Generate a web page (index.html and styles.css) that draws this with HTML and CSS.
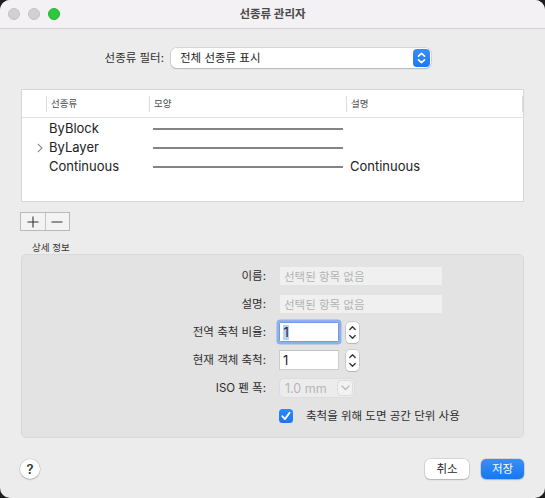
FILE: index.html
```html
<!DOCTYPE html>
<html lang="ko">
<head>
<meta charset="utf-8">
<title>선종류 관리자</title>
<link rel="stylesheet" href="styles.css">
</head>
<body>
<div class="window">
  <div class="titlebar">
    <div class="lights">
      <span class="light gray"></span>
      <span class="light gray"></span>
      <span class="light green"></span>
    </div>
    <div class="title">선종류 관리자</div>
    <div></div>
  </div>

  <div class="content">
    <div class="filter-row">
      <label class="filter-label">선종류 필터:</label>
      <div class="popup">
        <span class="popup-text">전체 선종류 표시</span>
        <span class="popup-arrows">
          <svg width="17" height="18" viewBox="0 0 17 18"><path d="M5.5 7.2 L8.5 4.4 L11.5 7.2 M5.5 10.8 L8.5 13.6 L11.5 10.8" fill="none" stroke="#fff" stroke-width="1.6" stroke-linecap="round" stroke-linejoin="round"/></svg>
        </span>
      </div>
    </div>

    <div class="table">
      <div class="thead">
        <div class="th"></div>
        <div class="th div">선종류</div>
        <div class="th div">모양</div>
        <div class="th div last">설명</div>
      </div>
      <div class="tbody">
        <div class="tr">
          <div class="td"></div>
          <div class="td name">ByBlock</div>
          <div class="td shape"><span class="line"></span></div>
          <div class="td desc"></div>
        </div>
        <div class="tr">
          <div class="td disc"><svg width="6" height="10" viewBox="0 0 6 10"><path d="M0.8 0.8 L5 5 L0.8 9.2" fill="none" stroke="#8a8a8a" stroke-width="1.1"/></svg></div>
          <div class="td name">ByLayer</div>
          <div class="td shape"><span class="line"></span></div>
          <div class="td desc"></div>
        </div>
        <div class="tr">
          <div class="td"></div>
          <div class="td name">Continuous</div>
          <div class="td shape"><span class="line"></span></div>
          <div class="td desc">Continuous</div>
        </div>
      </div>
    </div>

    <div class="segmented">
      <span class="seg">
        <svg width="12" height="12" viewBox="0 0 12 12"><path d="M6 0.5 V11.5 M0.5 6 H11.5" stroke="#333" stroke-width="1.1"/></svg>
      </span>
      <span class="seg">
        <svg width="12" height="12" viewBox="0 0 12 12"><path d="M0.5 6 H11.5" stroke="#333" stroke-width="1.1"/></svg>
      </span>
    </div>

    <div class="section-label">상세 정보</div>

    <div class="details">
      <div class="dl">이름:</div>
      <div class="dv"><div class="field disabled wide">선택된 항목 없음</div></div>

      <div class="dl">설명:</div>
      <div class="dv"><div class="field disabled wide">선택된 항목 없음</div></div>

      <div class="dl">전역 축척 비율:</div>
      <div class="dv">
        <div class="field num focus"><span class="sel">1</span></div>
        <span class="stepper">
          <svg width="13" height="21" viewBox="0 0 13 21"><path d="M3.8 7.5 L6.5 4.8 L9.2 7.5 M3.8 13.5 L6.5 16.2 L9.2 13.5" fill="none" stroke="#333" stroke-width="1.3" stroke-linecap="round" stroke-linejoin="round"/></svg>
        </span>
      </div>

      <div class="dl">현재 객체 축척:</div>
      <div class="dv">
        <div class="field num">1</div>
        <span class="stepper">
          <svg width="13" height="21" viewBox="0 0 13 21"><path d="M3.8 7.5 L6.5 4.8 L9.2 7.5 M3.8 13.5 L6.5 16.2 L9.2 13.5" fill="none" stroke="#333" stroke-width="1.3" stroke-linecap="round" stroke-linejoin="round"/></svg>
        </span>
      </div>

      <div class="dl">ISO 펜 폭:</div>
      <div class="dv">
        <div class="mini-popup">
          <span class="mini-text">1.0 mm</span>
          <span class="mini-btn">
            <svg width="9" height="6" viewBox="0 0 9 6"><path d="M1 1 L4.5 4.5 L8 1" fill="none" stroke="#b8b8b8" stroke-width="1.2" stroke-linecap="round" stroke-linejoin="round"/></svg>
          </span>
        </div>
      </div>

      <div class="dl"></div>
      <div class="dv check-row">
        <span class="checkbox">
          <svg width="14" height="14" viewBox="0 0 14 14"><path d="M3.4 7.3 L6 10 L10.6 3.8" fill="none" stroke="#fff" stroke-width="1.9" stroke-linecap="round" stroke-linejoin="round"/></svg>
        </span>
        <span class="check-text">축척을 위해 도면 공간 단위 사용</span>
      </div>
    </div>

    <div class="footer">
      <span class="help">?</span>
      <span class="spacer"></span>
      <button class="btn">취소</button>
      <button class="btn primary">저장</button>
    </div>
  </div>
</div>
</body>
</html>
```

FILE: styles.css
```css
html, body {
  margin: 0;
  padding: 0;
  background: #1e1e1e;
}

body {
  width: 545px;
  height: 498px;
  overflow: hidden;
}

.window {
  width: 545px;
  height: 498px;
  background: #ececec;
  border-radius: 10px;
  overflow: hidden;
  display: flex;
  flex-direction: column;
  font-family: Inter, "Noto Sans CJK KR", sans-serif;
  color: #2b2b2b;
}

/* title bar */
.titlebar {
  height: 28px;
  flex: none;
  background: #f3f1f4;
  border-bottom: 1px solid #d2d1d3;
  display: grid;
  grid-template-columns: 1fr auto 1fr;
  align-items: center;
}

.lights {
  display: flex;
  gap: 8px;
  padding-left: 8px;
}

.light {
  width: 12px;
  height: 12px;
  border-radius: 50%;
  box-sizing: border-box;
}

.light.gray {
  background: #d1d0d2;
  border: 0.5px solid #c3c2c4;
}

.light.green {
  background: #2bc840;
  border: 0.5px solid #22b236;
}

.title {
  font-size: 11.5px;
  font-weight: 700;
  color: #4a4a4a;
  line-height: 14px;
}

/* content */
.content {
  padding: 0 21px;
  display: flex;
  flex-direction: column;
}

.filter-row {
  margin-top: 19px;
  height: 20px;
  display: flex;
  align-items: center;
  gap: 7px;
}

.filter-label {
  width: 143px;
  text-align: right;
  font-size: 11.5px;
  line-height: 14px;
  color: #2e2e2e;
}

.popup {
  width: 260px;
  height: 20px;
  box-sizing: border-box;
  background: #fff;
  border-radius: 5px;
  box-shadow: 0 0 0 0.5px rgba(0, 0, 0, 0.18), 0 1px 1.5px rgba(0, 0, 0, 0.14);
  display: flex;
  align-items: center;
  justify-content: space-between;
  padding: 0 1px 0 9px;
}

.popup-text {
  font-size: 11.5px;
  line-height: 14px;
  color: #222;
}

.popup-arrows {
  width: 17px;
  height: 18px;
  border-radius: 4px;
  background: linear-gradient(#3a8ef8, #1f78f3);
  display: flex;
}

/* table */
.table {
  margin-top: 21px;
  height: 113px;
  box-sizing: border-box;
  background: #fff;
  border: 1px solid #d6d6d6;
}

.thead,
.tr {
  display: grid;
  grid-template-columns: 24px 103px 197px 1fr;
}

.thead {
  height: 27px;
  border-bottom: 1px solid #e3e3e3;
  align-items: center;
}

.th {
  position: relative;
  height: 27px;
  line-height: 27px;
  padding-left: 5px;
  font-size: 9.5px;
  color: #4a4a4a;
}

.th.div::before {
  content: "";
  position: absolute;
  left: 0;
  top: 6px;
  width: 1px;
  height: 16px;
  background: #dcdcdc;
}

.th.last::after {
  content: "";
  position: absolute;
  right: 0;
  top: 6px;
  width: 1px;
  height: 16px;
  background: #dcdcdc;
}

.tbody {
  padding-top: 1px;
}

.tr {
  height: 19px;
  align-items: center;
}

.td {
  font-size: 13px;
  line-height: 19px;
  color: #222;
  height: 19px;
}

.td.disc {
  padding-left: 15px;
  display: flex;
  align-items: center;
}

.td.name {
  padding-left: 3px;
}

.td.shape {
  padding-left: 4px;
  display: flex;
  align-items: center;
}

.line {
  display: block;
  width: 190px;
  height: 2px;
  background: #838383;
}

.td.desc {
  padding-left: 4px;
}

/* segmented +/- */
.segmented {
  margin-top: 10px;
  margin-left: -1px;
  width: 50px;
  height: 19px;
  box-sizing: border-box;
  display: flex;
  border: 1px solid #b9b9b9;
  background: #f3f3f3;
}

.seg {
  flex: 1;
  display: flex;
  align-items: center;
  justify-content: center;
}

.seg + .seg {
  border-left: 1px solid #c4c4c4;
}

.section-label {
  margin-top: 10px;
  padding-left: 11px;
  font-size: 9.5px;
  line-height: 13px;
  height: 13px;
  color: #333;
}

/* details */
.details {
  margin-top: 0;
  height: 184px;
  box-sizing: border-box;
  background: #e3e3e3;
  border: 1px solid #d9d9d9;
  border-radius: 5px;
  padding: 11px 0;
  display: grid;
  grid-template-columns: 244px 1fr;
  grid-auto-rows: 20px;
  column-gap: 13px;
  row-gap: 8px;
}

.dl {
  text-align: right;
  font-size: 11.5px;
  line-height: 20px;
  color: #2e2e2e;
}

.dv {
  display: flex;
  align-items: center;
  gap: 7px;
}

.field {
  height: 20px;
  box-sizing: border-box;
  display: flex;
  align-items: center;
}

.field.disabled {
  background: #f0f0f0;
  border: 1px solid #e3e3e3;
  color: #b2b2b2;
  font-size: 11.5px;
  padding-left: 4px;
}

.field.wide {
  width: 164px;
}

.field.num {
  width: 60px;
  background: #fff;
  border: 1px solid #cdcdcd;
  border-top-color: #c2c2c2;
  font-size: 13px;
  color: #1e1e1e;
  padding-left: 3px;
}

.field.focus {
  border-color: #6d9be4;
  box-shadow: 0 0 0 2.5px #8eb1ec;
  border-radius: 1.5px;
}

.sel {
  background: #b5d2f7;
  line-height: 15px;
  padding: 0 0.5px;
}

.stepper {
  width: 13px;
  height: 21px;
  background: #fff;
  border-radius: 4px;
  box-shadow: 0 0 0 0.5px rgba(0, 0, 0, 0.2), 0 1px 1px rgba(0, 0, 0, 0.12);
  display: flex;
}

.mini-popup {
  width: 76px;
  height: 20px;
  box-sizing: border-box;
  border-radius: 5px;
  background: #ececec;
  border: 1px solid #dddddd;
  display: flex;
  align-items: center;
  justify-content: space-between;
  padding: 0 1px 0 5px;
}

.mini-text {
  font-size: 12.5px;
  color: #b6b6b6;
}

.mini-btn {
  width: 16px;
  height: 16px;
  box-sizing: border-box;
  border: 1px solid #dcdcdc;
  border-radius: 4px;
  background: #f2f2f2;
  display: flex;
  align-items: center;
  justify-content: center;
}

.check-row {
  gap: 13px;
}

.checkbox {
  width: 14px;
  height: 14px;
  border-radius: 3.5px;
  background: linear-gradient(#2f88f8, #1a76f2);
  display: flex;
}

.check-text {
  font-size: 11.5px;
  line-height: 20px;
  color: #2e2e2e;
}

/* footer */
.footer {
  margin-top: 21px;
  height: 20px;
  display: flex;
  align-items: center;
  gap: 12px;
}

.help {
  width: 20px;
  height: 20px;
  margin-left: -1px;
  border-radius: 50%;
  background: #fff;
  box-shadow: 0 0 0 0.5px rgba(0, 0, 0, 0.16), 0 1px 1.5px rgba(0, 0, 0, 0.18);
  display: flex;
  align-items: center;
  justify-content: center;
  font-size: 13px;
  font-weight: 600;
  color: #333;
}

.spacer {
  flex: 1;
}

.btn {
  height: 20px;
  width: 44px;
  padding: 0;
  border: none;
  border-radius: 5px;
  background: #fff;
  box-shadow: 0 0 0 0.5px rgba(0, 0, 0, 0.18), 0 1px 1.5px rgba(0, 0, 0, 0.16);
  font-family: Inter, "Noto Sans CJK KR", sans-serif;
  font-size: 11.5px;
  color: #2b2b2b;
  line-height: 20px;
}

.btn.primary {
  width: 43px;
  background: linear-gradient(#3890f8, #1776f2);
  color: #fff;
}
```
